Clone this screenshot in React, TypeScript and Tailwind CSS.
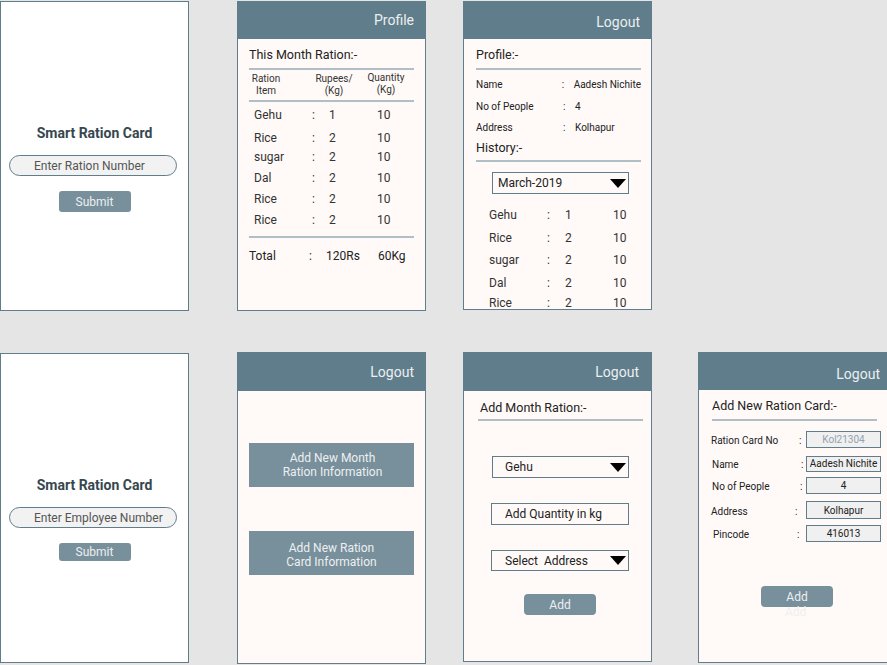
import React from "react";

const Tri = () => (
  <div className="shrink-0 w-0 h-0 border-l-[8px] border-r-[8px] border-t-[9px] border-l-transparent border-r-transparent border-t-black" />
);

const Divider = ({ cls }: { cls: string }) => <div className={"shrink-0 h-[2px] bg-[#b0bec5] " + cls} />;

const Header = ({ label, cls }: { label: string; cls: string }) => (
  <div className={"shrink-0 bg-[#607d8b] flex items-center justify-end text-[14px] text-[#eceff1] " + cls}>{label}</div>
);

function Login({ top, placeholder, btnH }: { top: string; placeholder: string; btnH: string }) {
  return (
    <div className={"absolute left-0 w-[189px] h-[310px] border border-[#607d8b] bg-white flex flex-col items-center pt-[122px] " + top}>
      <div className="text-[14px] leading-[18px] font-bold text-[#37474f]">Smart Ration Card</div>
      <div className="self-start ml-[8px] mt-[13px] w-[168px] h-[21px] rounded-full border border-[#607d8b] bg-[#f2f2f2] flex items-center pl-[24px] text-[12px] text-[#555] whitespace-nowrap">
        {placeholder}
      </div>
      <div className={"mt-[15px] w-[72px] rounded-[3px] bg-[#78909c] flex items-center justify-center text-[12px] text-[#eceff1] " + btnH}>
        Submit
      </div>
    </div>
  );
}

type R = { item: string; rate: string; qty: string; mt: string };

const rows2: R[] = [
  { item: "Gehu", rate: "1", qty: "10", mt: "mt-[3px]" },
  { item: "Rice", rate: "2", qty: "10", mt: "mt-[3px]" },
  { item: "sugar", rate: "2", qty: "10", mt: "-mt-px" },
  { item: "Dal", rate: "2", qty: "10", mt: "mt-px" },
  { item: "Rice", rate: "2", qty: "10", mt: "mt-px" },
  { item: "Rice", rate: "2", qty: "10", mt: "mt-px" },
];

const rows3: R[] = [
  { item: "Gehu", rate: "1", qty: "10", mt: "mt-[11px]" },
  { item: "Rice", rate: "2", qty: "10", mt: "mt-[3px]" },
  { item: "sugar", rate: "2", qty: "10", mt: "mt-[2px]" },
  { item: "Dal", rate: "2", qty: "10", mt: "mt-[3px]" },
  { item: "Rice", rate: "2", qty: "10", mt: "mt-0" },
];

function Month() {
  return (
    <div className="absolute left-[237px] top-[1px] w-[189px] h-[310px] border border-[#607d8b] bg-[#fffaf8] flex flex-col">
      <Header label="Profile" cls="h-[37px] pr-[11px]" />
      <div className="px-[11px] flex flex-col">
        <div className="mt-[8px] text-[12.5px] leading-[16px] text-[#222]">This Month Ration:-</div>
        <Divider cls="mt-[5px]" />
        <div className="h-[30px] flex items-center text-[10px] leading-[12px] text-[#333]">
          <div className="w-[34px] text-center">Ration<br />Item</div>
          <div className="w-[50px] ml-[26px] text-center">Rupees/<br />(Kg)</div>
          <div className="w-[44px] ml-[5px] text-center -mt-[2px]">Quantity<br />(Kg)</div>
        </div>
        <Divider cls="" />
        {rows2.map((r, i) => (
          <div key={i} className={"flex h-[20px] items-center text-[12px] text-[#333] pl-[5px] " + r.mt}>
            <div className="w-[58px]">{r.item}</div>
            <div className="w-[17px]">:</div>
            <div className="w-[48px]">{r.rate}</div>
            <div>{r.qty}</div>
          </div>
        ))}
        <Divider cls="mt-[6px]" />
        <div className="mt-[8px] flex h-[20px] items-center text-[12px] text-[#222]">
          <div className="w-[60px]">Total</div>
          <div className="w-[17px]">:</div>
          <div className="w-[52px]">120Rs</div>
          <div>60Kg</div>
        </div>
      </div>
    </div>
  );
}

function Select({ label, cls }: { label: string; cls: string }) {
  return (
    <div className={"shrink-0 border border-[#607d8b] bg-[#fffaf8] flex items-center justify-between pr-[2px] text-[12px] text-[#222] " + cls}>
      <span className="whitespace-pre">{label}</span>
      <Tri />
    </div>
  );
}

function Profile() {
  const info = [
    { l: "Name", v: "Aadesh Nichite", mt: "mt-[8px]" },
    { l: "No of People", v: "4", mt: "mt-[10px]" },
    { l: "Address", v: "Kolhapur", mt: "mt-[9px]" },
  ];
  return (
    <div className="absolute left-[463px] top-[1px] w-[189px] h-[309px] border border-[#607d8b] bg-[#fffaf8] flex flex-col overflow-hidden">
      <Header label="Logout" cls="h-[37px] pr-[11px] pt-[3px]" />
      <div className="shrink-0 pl-[12px] pr-[10px] flex flex-col">
        <div className="mt-[8px] text-[12.5px] leading-[16px] text-[#222]">Profile:-</div>
        <Divider cls="mt-[5px]" />
        {info.map((x, i) => (
          <div key={i} className={"shrink-0 flex h-[12px] items-center text-[10px] text-[#222] whitespace-nowrap " + x.mt}>
            <div className="w-[87px]">{x.l}</div>
            <div className="w-[12px]">:</div>
            <div>{x.v}</div>
          </div>
        ))}
        <div className="mt-[7px] text-[12.5px] leading-[16px] text-[#222]">History:-</div>
        <Divider cls="mt-[4px]" />
        <div className="shrink-0 mt-[10px] ml-[16px] w-[137px] h-[22px] border border-[#607d8b] bg-[#fffaf8] flex items-center justify-between pl-[5px] pr-[2px] text-[12px] text-[#222]">
          <span>March-2019</span>
          <Tri />
        </div>
        {rows3.map((r, i) => (
          <div key={i} className={"shrink-0 flex h-[20px] items-center text-[12px] text-[#333] pl-[13px] " + r.mt}>
            <div className="w-[58px]">{r.item}</div>
            <div className="w-[18px]">:</div>
            <div className="w-[48px]">{r.rate}</div>
            <div>{r.qty}</div>
          </div>
        ))}
      </div>
    </div>
  );
}

function Menu() {
  return (
    <div className="absolute left-[237px] top-[352px] w-[189px] h-[312px] border border-[#607d8b] bg-[#fffaf8] flex flex-col">
      <Header label="Logout" cls="h-[38px] pr-[11px]" />
      <div className="mt-[52px] mx-[11px] h-[44px] bg-[#78909c] flex items-center justify-center text-center text-[12px] leading-[14px] text-[#eceff1] pl-[2px]">
        Add New Month<br />Ration Information
      </div>
      <div className="mt-[44px] mx-[11px] h-[44px] bg-[#78909c] flex items-center justify-center text-center text-[12px] leading-[14px] text-[#eceff1] pt-[4px]">
        Add New Ration<br />Card Information
      </div>
    </div>
  );
}

function AddMonth() {
  return (
    <div className="absolute left-[463px] top-[352px] w-[189px] h-[310px] border border-[#607d8b] bg-[#fffaf8] flex flex-col">
      <Header label="Logout" cls="h-[38px] pr-[12px]" />
      <div className="mt-[9px] pl-[16px] text-[12.5px] leading-[16px] text-[#222]">Add Month Ration:-</div>
      <Divider cls="mt-[3px] ml-[14px] w-[165px]" />
      <Select label="Gehu" cls="mt-[35px] ml-[28px] w-[137px] h-[22px] pl-[12px]" />
      <div className="mt-[25px] ml-[27px] w-[138px] h-[22px] border border-[#607d8b] bg-[#fffaf8] flex items-center pl-[13px] text-[12px] text-[#222]">
        Add Quantity in kg
      </div>
      <Select label="Select  Address" cls="mt-[25px] ml-[27px] w-[138px] h-[21px] pl-[13px]" />
      <div className="mt-[23px] ml-[60px] w-[72px] h-[21px] rounded-[4px] bg-[#78909c] flex items-center justify-center text-[12px] text-[#eceff1]">
        Add
      </div>
    </div>
  );
}

function AddCard() {
  const f = [
    { l: "Ration Card No", v: "Kol21304", h: "h-[17px]", mt: "mt-[10px]", c: "text-[#90a4ae]", lp: "pl-[12px]", cw: "w-[7px]" },
    { l: "Name", v: "Aadesh Nichite", h: "h-[16px]", mt: "mt-[7px]", c: "text-[#222]", lp: "pl-[13px]", cw: "w-[5px]" },
    { l: "No of People", v: "4", h: "h-[17px]", mt: "mt-[5px]", c: "text-[#222]", lp: "pl-[13px]", cw: "w-[6px]" },
    { l: "Address", v: "Kolhapur", h: "h-[18px]", mt: "mt-[7px]", c: "text-[#222]", lp: "pl-[12px]", cw: "w-[11px]" },
    { l: "Pincode", v: "416013", h: "h-[17px]", mt: "mt-[6px]", c: "text-[#222]", lp: "pl-[14px]", cw: "w-[9px]" },
  ];
  return (
    <div className="absolute left-[698px] top-[352px] w-[191px] h-[311px] border border-[#607d8b] bg-[#fffaf8] flex flex-col">
      <Header label="Logout" cls="h-[37px] pr-[8px] pt-[6px]" />
      <div className="mt-[8px] pl-[13px] text-[12.5px] leading-[16px] text-[#222]">Add New Ration Card:-</div>
      <Divider cls="mt-[5px] ml-[13px] w-[165px]" />
      {f.map((x, i) => (
        <div key={i} className={"flex items-center text-[10px] whitespace-nowrap " + x.mt}>
          <div className={"w-[107px] flex text-[#222] " + x.lp}>
            <span className="flex-1 mt-[2px]">{x.l}</span>
            <span className={"mt-[2px] " + x.cw}>:</span>
          </div>
          <div className={"w-[75px] border border-[#607d8b] bg-[#f0f0f0] flex items-center justify-center " + x.h + " " + x.c}>
            {x.v}
          </div>
        </div>
      ))}
      <div className="relative mt-[44px] ml-[62px] w-[72px] h-[21px] rounded-[4px] bg-[#78909c] flex items-center justify-center text-[12px] text-[#eceff1]">
        Add
        <span className="absolute left-[24px] top-[17px] text-[12px] text-[#f0f0f0]">Add</span>
      </div>
    </div>
  );
}

export default function App() {
  return (
    <div className="relative w-[887px] h-[665px] overflow-hidden bg-[#e5e5e5] font-['Roboto',sans-serif]">
      <Login top="top-[1px]" placeholder="Enter Ration Number" btnH="h-[21px]" />
      <Month />
      <Profile />
      <Login top="top-[353px]" placeholder="Enter Employee Number" btnH="h-[18px]" />
      <Menu />
      <AddMonth />
      <AddCard />
    </div>
  );
}
